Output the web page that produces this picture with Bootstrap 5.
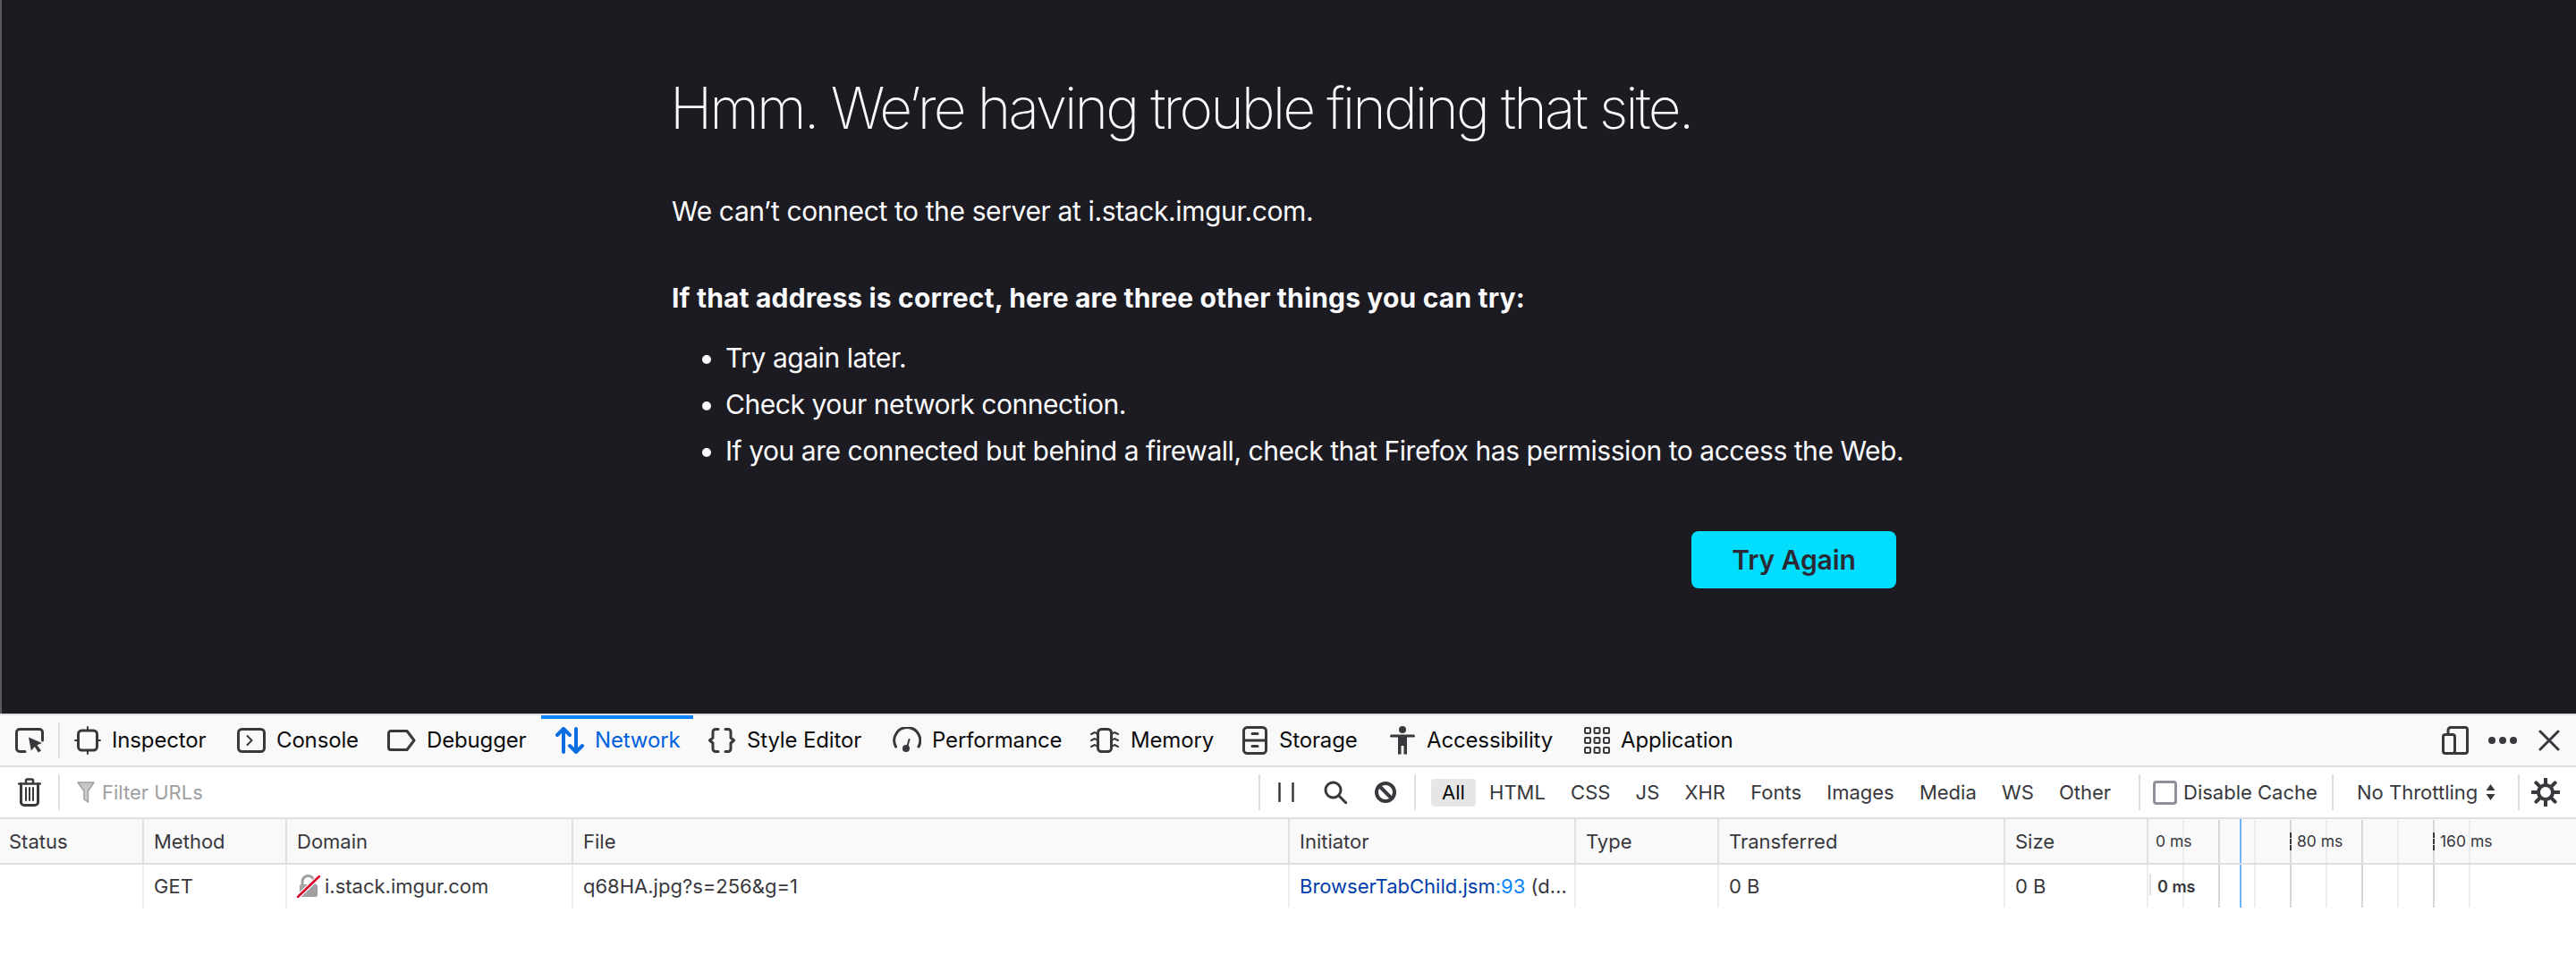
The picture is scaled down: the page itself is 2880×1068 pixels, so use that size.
<!DOCTYPE html>
<html lang="en">
<head>
  <meta charset="UTF-8" />
  <title>Server Not Found</title>
  <link href="https://cdn.jsdelivr.net/npm/bootstrap@5.3.2/dist/css/bootstrap.min.css" rel="stylesheet" />
  <style>
    html, body { height: 100%; }
    body {
      font-family: Inter, "Liberation Sans", sans-serif;
      background: #fff;
      overflow: hidden;
    }
    svg { display: block; flex-shrink: 0; }
    .ico { fill: none; stroke: #38383d; stroke-width: 3; stroke-linecap: round; stroke-linejoin: round; }
    .ico-fill { fill: #38383d; stroke: none; }

    /* Error page */
    #errorpage {
      height: 798px;
      background: #1c1b22;
      color: #fbfbfe;
      border-left: 2px solid #5a5a5f;
      padding: 83px 0 0 748px;
    }
    #errorbox { width: 1370px; }
    #errorbox h1 {
      font-size: 64px;
      font-weight: 200;
      line-height: 76px;
      letter-spacing: -2.9px;
      margin: 0 0 51px -1px;
    }
    #errorbox p { font-size: 30px; line-height: 52px; margin: 0 0 0 1px; letter-spacing: -.38px; }
    #errorbox p.lead-in { margin-bottom: 45px; }
    #errorbox p.strong-in { font-weight: 700; margin-bottom: 15px; letter-spacing: .16px; }
    #errorbox ul { font-size: 30px; line-height: 52px; margin: 0; padding-left: 61px; letter-spacing: -.46px; white-space: nowrap; }
    .btn-retry {
      width: 229px;
      height: 64px;
      margin-top: 64px;
      background: #00ddff;
      color: #2b2a33;
      border: 0;
      border-radius: 8px;
      font-size: 30px;
      font-weight: 600;
      letter-spacing: -.1px;
      padding: 0;
    }

    /* Toolbars */
    #tabbar {
      height: 60px;
      background: #f9f9fa;
      border-top: 2px solid #e0e0e2;
      border-bottom: 2px solid #e0e0e2;
      font-size: 24px;
      letter-spacing: -.15px;
      color: #0c0c0d;
    }
    .tb-sep { width: 2px; height: 40px; background: #e0e0e2; flex-shrink: 0; }
    .tab-item {
      height: 56px;
      padding: 0 0 0 16px;
      gap: 12px;
      white-space: nowrap;
      flex-shrink: 0;
    }
    .tab-item.is-active { color: #0060df; box-shadow: inset 0 4px 0 #0a84ff; }
    .tw-inspector { width: 182px; }
    .tw-console { width: 168px; }
    .tw-debugger { width: 188px; }
    .tw-network { width: 170px; }
    .tw-style { width: 207px; padding-left: 17px; gap: 13px; }
    .tw-perf { width: 221px; }
    .tw-memory { width: 170px; gap: 13px; }
    .tw-storage { width: 165px; gap: 13px; }
    .tw-access { width: 217px; gap: 13px; }
    .tw-app { width: 200px; }
    .win-btns { gap: 22px; padding-right: 18px; }
    .win-btns .x-btn { margin-left: 2px; }

    #filterbar {
      height: 58px;
      border-bottom: 2px solid #e0e0e2;
      font-size: 22px;
      color: #38383d;
      white-space: nowrap;
    }
    .filter-hint { color: #a0a0a3; padding-left: 19px; gap: 8px; width: 1340px; }
    .btn-cluster { padding-left: 20px; width: 172px; }
    .type-row { padding-left: 17px; width: 808px; gap: 12.2px; }
    .type-btn { padding: 0 8px; line-height: 31px; border-radius: 4px; }
    .type-btn.is-on { background: #e6e6e6; color: #0c0c0d; padding: 0 12px; margin-right: -5px; }
    .check-box { width: 27px; height: 27px; border: 3px solid #8f8f9d; border-radius: 4px; background: #fff; }
    .cache-group { padding-left: 14px; width: 214px; gap: 7px; }
    .throttle-group { padding-left: 26px; width: 206px; gap: 9px; }

    /* Requests table */
    .net-table { table-layout: fixed; width: 100%; margin: 0; font-size: 22px; color: #38383d; }
    .net-table > :not(caption) > * > * {
      padding: 0 0 0 11px;
      box-shadow: none;
      border: 0;
      border-left: 2px solid #ededf0;
      vertical-align: middle;
      white-space: nowrap;
      overflow: hidden;
      background: transparent;
      color: inherit;
      font-weight: 400;
    }
    .net-table > :not(caption) > * > *:first-child { border-left: 0; padding-left: 10px; }
    .net-table thead tr { height: 50px; background: #f9f9fa; border-bottom: 2px solid #e0e0e2; }
    .net-table thead th { border-left-color: #e0e0e2; padding-top: 2px; }
    .net-table tbody tr { height: 48px; border: 0; }
    .net-table .cell-time { padding: 0; position: relative; }
    .tick-track {
      width: 362px;
      height: 48px;
      display: flex;
      align-items: center;
      background-image:
        linear-gradient(to right, transparent 78px, #d7d7db 78px, #d7d7db 80px),
        linear-gradient(to right, transparent 38px, #ededf0 38px, #ededf0 40px);
      background-size: 80px 100%, 40px 100%;
      background-position: 0 0, 0 0;
    }
    .tick-label { width: 160px; font-size: 17.5px; padding-left: 8px; line-height: 20px; position: relative; flex-shrink: 0; }
    .tick-label.has-mark { padding-left: 6px; }
    .tick-label.has-mark::before {
      content: "";
      position: absolute;
      left: -2px;
      top: 0;
      height: 20px;
      border-left: 2px dashed #38383d;
    }
    .load-line { position: absolute; top: 0; bottom: 0; left: 102px; width: 2px; background: #6cb4ff; }
    .time-value { width: 160px; font-size: 18px; font-weight: 600; padding-left: 10px; position: relative; flex-shrink: 0; }
    .time-value::before {
      content: "";
      position: absolute;
      left: 1px;
      top: -1px;
      height: 24px;
      width: 2px;
      background: #e0e0e2;
    }
    .link-file { color: #003eaa; }
    .link-line { color: #0a84ff; }
  </style>
</head>
<body>

  <main id="errorpage">
    <div id="errorbox">
      <h1>Hmm. We’re having trouble finding that site.</h1>
      <p class="lead-in">We can’t connect to the server at i.stack.imgur.com.</p>
      <p class="strong-in">If that address is correct, here are three other things you can try:</p>
      <ul>
        <li>Try again later.</li>
        <li>Check your network connection.</li>
        <li>If you are connected but behind a firewall, check that Firefox has permission to access the Web.</li>
      </ul>
      <div class="d-flex justify-content-end">
        <button type="button" class="btn btn-retry">Try Again</button>
      </div>
    </div>
  </main>

  <!-- Devtools tabs -->
  <div id="tabbar" class="d-flex align-items-center">
    <div class="d-flex align-items-center justify-content-center" style="width:65px">
      <svg width="32" height="28" viewBox="0 0 32 28" class="ico"><path d="M11 26.500H5A3.500 3.500 0 0 1 1.500 23V5A3.500 3.500 0 0 1 5 1.500h22A3.500 3.500 0 0 1 30.500 5v9"/><path class="ico-fill" d="M15 10.500l15 6.500-5.500 2.200 4.500 6.300-3.200 2-4-6.500-4 4.500z"/></svg>
    </div>
    <div class="tb-sep"></div>
    <div class="tab-item tw-inspector d-flex align-items-center">
      <svg width="30" height="32" viewBox="0 0 30 32" class="ico"><rect x="4.500" y="5" width="21" height="22" rx="4"/><path d="M15 1v4M15 27v4M1 16h3.500M25.500 16H29" stroke-width="2"/></svg>
      <span>Inspector</span>
    </div>
    <div class="tab-item tw-console d-flex align-items-center">
      <svg width="32" height="28" viewBox="0 0 32 28" class="ico"><rect x="1.500" y="1.500" width="29" height="25" rx="4"/><path d="M11.500 9l5 5-5 5" stroke-width="2"/></svg>
      <span>Console</span>
    </div>
    <div class="tab-item tw-debugger d-flex align-items-center">
      <svg width="32" height="24" viewBox="0 0 32 24" class="ico"><path d="M4 1.500h18l8 10.500-8 10.500H4A2.500 2.500 0 0 1 1.500 20V4A2.500 2.500 0 0 1 4 1.500z"/></svg>
      <span>Debugger</span>
    </div>
    <div class="tab-item tw-network is-active d-flex align-items-center">
      <svg width="32" height="30" viewBox="0 0 32 30" fill="none" stroke="#0a6ee0" stroke-width="4" stroke-linecap="round" stroke-linejoin="round"><path d="M9 28V2M2 9l7-7 7 7M23 2v26M16 21l7 7 7-7"/></svg>
      <span>Network</span>
    </div>
    <div class="tab-item tw-style d-flex align-items-center">
      <svg width="30" height="28" viewBox="0 0 30 28" class="ico"><path d="M11 1.500H8A3 3 0 0 0 5 4.500V11l-3.500 3L5 17v6.500a3 3 0 0 0 3 3h3M19 1.500h3a3 3 0 0 1 3 3V11l3.500 3-3.500 3v6.500a3 3 0 0 1-3 3h-3"/></svg>
      <span>Style Editor</span>
    </div>
    <div class="tab-item tw-perf d-flex align-items-center">
      <svg width="32" height="30" viewBox="0 0 32 30" class="ico"><path d="M3.500 22A14.500 14.500 0 1 1 29 22"/><circle class="ico-fill" cx="15" cy="24" r="4"/><path d="M16 23l2.500-9" stroke-width="2"/></svg>
      <span>Performance</span>
    </div>
    <div class="tab-item tw-memory d-flex align-items-center">
      <svg width="32" height="28" viewBox="0 0 32 28" class="ico"><rect x="8.500" y="1.500" width="15" height="25" rx="4"/><path d="M1 7l4-2 3 2M1 14l4-2 3 2M1 21l4-2 3 2M31 7l-4-2-3 2M31 14l-4-2-3 2M31 21l-4-2-3 2" stroke-width="2"/></svg>
      <span>Memory</span>
    </div>
    <div class="tab-item tw-storage d-flex align-items-center">
      <svg width="28" height="32" viewBox="0 0 28 32" class="ico"><rect x="1.500" y="1.500" width="25" height="29" rx="4"/><path d="M1.500 16h25M11 8.500h6M11 22.500h6"/></svg>
      <span>Storage</span>
    </div>
    <div class="tab-item tw-access d-flex align-items-center">
      <svg width="28" height="32" viewBox="0 0 28 32"><circle class="ico-fill" cx="14" cy="4" r="4"/><path class="ico-fill" d="M1.500 9.500h25a1.500 1.500 0 0 1 0 3H19v19h-3.500V22h-3v9.500H9V12.500H1.500a1.500 1.500 0 0 1 0-3z"/></svg>
      <span>Accessibility</span>
    </div>
    <div class="tab-item tw-app d-flex align-items-center">
      <svg width="29" height="30" viewBox="0 0 29 30" fill="none" stroke="#38383d" stroke-width="2"><rect x="1" y="1" width="6" height="6" rx="1"/><rect x="11.500" y="1" width="6" height="6" rx="1"/><rect x="22" y="1" width="6" height="6" rx="1"/><rect x="1" y="12" width="6" height="6" rx="1"/><rect x="11.500" y="12" width="6" height="6" rx="1"/><rect x="22" y="12" width="6" height="6" rx="1"/><rect x="1" y="23" width="6" height="6" rx="1"/><rect x="11.500" y="23" width="6" height="6" rx="1"/><rect x="22" y="23" width="6" height="6" rx="1"/></svg>
      <span>Application</span>
    </div>
    <div class="win-btns ms-auto d-flex align-items-center">
      <svg width="30" height="32" viewBox="0 0 30 32" class="ico"><path d="M7 8V4.500A3 3 0 0 1 10 1.500h16.500a2.500 2.500 0 0 1 2 2.500v24a2.500 2.500 0 0 1-2 2.500H15"/><rect x="1.500" y="9.500" width="13" height="21" rx="2.500"/></svg>
      <svg width="32" height="10" viewBox="0 0 32 10"><circle class="ico-fill" cx="4" cy="5" r="4"/><circle class="ico-fill" cx="16" cy="5" r="4"/><circle class="ico-fill" cx="28" cy="5" r="4"/></svg>
      <svg width="24" height="24" viewBox="0 0 24 24" class="ico x-btn"><path d="M2 2l20 20M22 2L2 22"/></svg>
    </div>
  </div>

  <!-- Filter row -->
  <div id="filterbar" class="d-flex align-items-center">
    <div class="d-flex align-items-center justify-content-center" style="width:65px">
      <svg width="26" height="32" viewBox="0 0 26 32" class="ico"><path d="M1 6.500h24M9 6V3a1.500 1.500 0 0 1 1.500-1.500h5A1.500 1.500 0 0 1 17 3v3" stroke-width="2.500"/><path d="M3.500 6.500V27a3.500 3.500 0 0 0 3.500 3.500h12a3.500 3.500 0 0 0 3.500-3.500V6.500"/><path d="M9 11v14M13 11v14M17 11v14" stroke-width="2"/></svg>
    </div>
    <div class="tb-sep"></div>
    <div class="d-flex align-items-center filter-hint">
      <svg width="20" height="24" viewBox="0 0 20 24"><path d="M1 1h18l-6.500 9.500V23L8 20v-9.500z" fill="#c8c8ca" stroke="#a0a0a3" stroke-width="1.500" stroke-linejoin="round"/></svg>
      <span>Filter URLs</span>
    </div>
    <div class="tb-sep"></div>
    <div class="btn-cluster d-flex align-items-center">
      <svg width="18" height="22" viewBox="0 0 18 22" class="ico" style="margin-right:33px"><path d="M1.500 1v20M16.500 1v20" stroke-width="2.500"/></svg>
      <svg width="26" height="26" viewBox="0 0 26 26" class="ico" style="margin-right:31px"><circle cx="10.500" cy="10.500" r="8.500"/><path d="M17 17l8 8"/></svg>
      <svg width="24" height="24" viewBox="0 0 24 24" class="ico"><circle cx="12" cy="12" r="10" stroke-width="4"/><path d="M5 5l14 14" stroke-width="4"/></svg>
    </div>
    <div class="tb-sep"></div>
    <div class="type-row d-flex align-items-center">
      <span class="type-btn is-on">All</span>
      <span class="type-btn">HTML</span>
      <span class="type-btn">CSS</span>
      <span class="type-btn">JS</span>
      <span class="type-btn">XHR</span>
      <span class="type-btn">Fonts</span>
      <span class="type-btn">Images</span>
      <span class="type-btn">Media</span>
      <span class="type-btn">WS</span>
      <span class="type-btn">Other</span>
    </div>
    <div class="tb-sep"></div>
    <div class="cache-group d-flex align-items-center">
      <span class="check-box"></span><span>Disable Cache</span>
    </div>
    <div class="tb-sep"></div>
    <div class="throttle-group d-flex align-items-center">
      <span>No Throttling</span>
      <svg width="11" height="18" viewBox="0 0 11 18"><path class="ico-fill" d="M5.500 0l5 7H.5zM5.500 18l-5-7h10z"/></svg>
    </div>
    <div class="tb-sep"></div>
    <div class="d-flex align-items-center" style="padding-left:13px">
      <svg width="32" height="32" viewBox="0 0 32 32" class="ico"><circle cx="16" cy="16" r="8" stroke-width="4"/><path d="M16 1v5M16 26v5M1 16h5M26 16h5M5.400 5.400l3.500 3.500M23.100 23.100l3.500 3.500M5.400 26.600l3.500-3.500M23.100 8.900l3.500-3.500" stroke-width="4"/></svg>
    </div>
  </div>

  <!-- Requests -->
  <table class="table net-table">
    <colgroup>
      <col style="width:160px"><col style="width:160px"><col style="width:320px"><col style="width:801px"><col style="width:320px"><col style="width:160px"><col style="width:320px"><col style="width:160px"><col style="width:479px">
    </colgroup>
    <thead>
      <tr>
        <th>Status</th><th>Method</th><th>Domain</th><th>File</th><th>Initiator</th><th>Type</th><th>Transferred</th><th>Size</th>
        <th class="cell-time">
          <div class="tick-track">
            <span class="tick-label">0 ms</span>
            <span class="tick-label has-mark">80 ms</span>
            <span class="tick-label has-mark">160 ms</span>
          </div>
          <span class="load-line"></span>
        </th>
      </tr>
    </thead>
    <tbody>
      <tr>
        <td></td>
        <td>GET</td>
        <td>
          <div class="d-flex align-items-center" style="gap:5px">
            <svg width="26" height="26" viewBox="0 0 26 26"><path d="M6 11V8a6.500 6.500 0 0 1 13 0v3" fill="none" stroke="#a0a0a3" stroke-width="3"/><rect x="3" y="11" width="20" height="14" rx="2" fill="#a0a0a3"/><path d="M1 25L25 2" stroke="#fff" stroke-width="5"/><path d="M1 25L25 2" stroke="#d70022" stroke-width="2.500" stroke-linecap="round"/></svg>
            <span>i.stack.imgur.com</span>
          </div>
        </td>
        <td>q68HA.jpg?s=256&amp;g=1</td>
        <td class="text-truncate"><span class="link-file">BrowserTabChild.jsm</span><span class="link-line">:93</span> (d…</td>
        <td></td>
        <td>0 B</td>
        <td>0 B</td>
        <td class="cell-time">
          <div class="tick-track">
            <span class="time-value">0 ms</span>
          </div>
          <span class="load-line"></span>
        </td>
      </tr>
    </tbody>
  </table>

</body>
</html>
